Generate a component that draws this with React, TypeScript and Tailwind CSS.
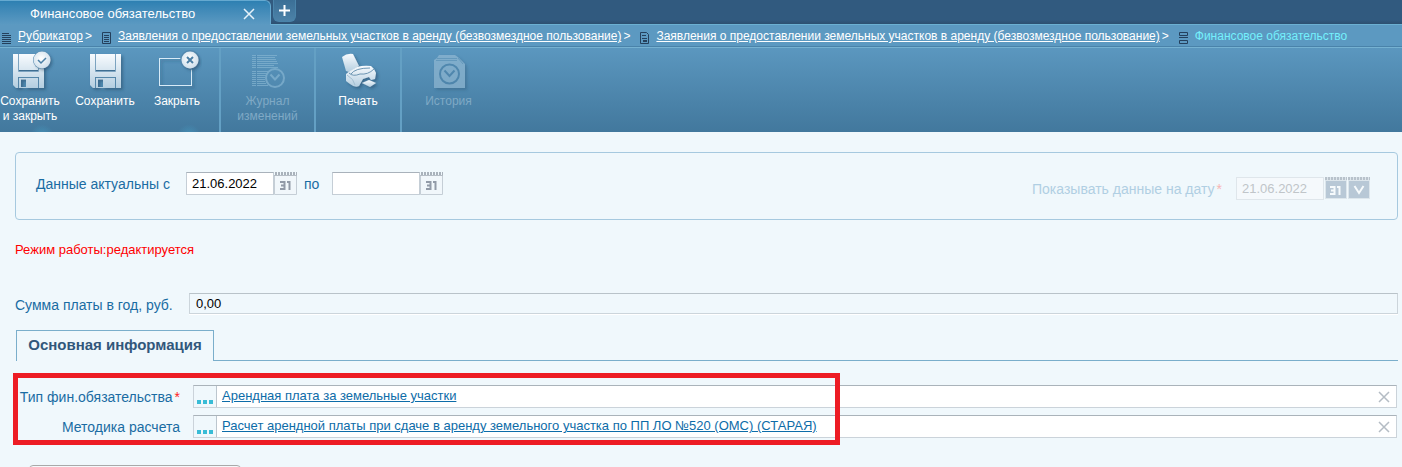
import type { ReactNode } from "react";

function Defs() {
  return (
    <svg className="absolute size-0" aria-hidden="true">
      <defs>
        <linearGradient id="metal" x1="0" y1="0" x2="0" y2="1">
          <stop offset="0" stopColor="#f8fbfe" />
          <stop offset="1" stopColor="#b4cee0" />
        </linearGradient>
        <radialGradient id="badge" cx="0.45" cy="0.4" r="0.6">
          <stop offset="0" stopColor="#ffffff" />
          <stop offset="1" stopColor="#cfdfeb" />
        </radialGradient>
        <filter id="shade" x="-20%" y="-20%" width="150%" height="150%">
          <feDropShadow dx="2" dy="2" stdDeviation="1.5" floodColor="#1d4766" floodOpacity="0.5" />
        </filter>
      </defs>
    </svg>
  );
}

function Icon({ children }: { children: ReactNode }) {
  return (
    <svg width="50" height="44" viewBox="0 0 50 44" fill="none" className="shrink-0" aria-hidden="true">
      {children}
    </svg>
  );
}

function Floppy() {
  return (
    <g filter="url(#shade)">
      <path
        fill="url(#metal)"
        fillRule="evenodd"
        d="M0 0H31V34H3L0 31ZM5 0V17H26V0H25V16H6V0ZM5 23V34H6V24H25V34H26V23ZM8 25.500V33H13V25.500Z"
      />
      <path d="M5.500 0V17.500H25.500V0" stroke="#7ba3c0" />
      <path d="M5.500 34V23.500H25.500V34" stroke="#5587aa" />
    </g>
  );
}

function SaveCloseIcon() {
  return (
    <Icon>
      <g transform="translate(8 4)">
        <Floppy />
      </g>
      <circle cx="37" cy="10" r="9" fill="#5288af" />
      <circle cx="37" cy="10" r="8.500" fill="url(#badge)" filter="url(#shade)" />
      <path d="M33 10L36 13L41 8" stroke="#4b7fa5" strokeWidth="1.500" />
    </Icon>
  );
}

function SaveIcon() {
  return (
    <Icon>
      <g transform="translate(10 4)">
        <Floppy />
      </g>
    </Icon>
  );
}

function CloseIcon() {
  return (
    <Icon>
      <rect x="7.500" y="8.500" width="32" height="27" stroke="#d8ebf7" filter="url(#shade)" />
      <circle cx="38" cy="10" r="10" fill="#5288af" />
      <circle cx="38" cy="10" r="8.500" fill="url(#badge)" filter="url(#shade)" />
      <path d="M35 7L41 13M41 7L35 13" stroke="#4b7fa5" strokeWidth="2" />
    </Icon>
  );
}

function JournalIcon() {
  return (
    <Icon>
      <g stroke="#8ab8d4" opacity="0.65">
        <path
          d="M9 5.500H34M9 7.500H32M9 9.500H33M9 11.500H34M9 13.500H35M9 15.500H31M9 17.500H35M9 21.500H27M9 23.500H25M9 25.500H23M9 27.500H22M9 29.500H22M9 31.500H22M9 33.500H23M9 35.500H25"
        />
        <path d="M13.500 5V36" stroke="#5189b0" />
        <circle cx="32" cy="28" r="9" strokeWidth="2" />
        <path d="M27.500 24.500L32 29.500L36.500 24.500" strokeWidth="2" />
      </g>
    </Icon>
  );
}

function PrinterIcon() {
  return (
    <Icon>
      <g filter="url(#shade)">
        <path fill="url(#metal)" d="M9 7Q14 3 20 4L26 16L16 22L13 21Z" />
        <path
          fill="url(#metal)"
          d="M17 21L24 17Q31 15 38 16Q42 19 43 23L42 29L38 30L36 27L30 29L26 36Q22 38 17 34L13 31V24Z"
        />
        <path fill="url(#metal)" d="M29 33L36 30L43 33L37 37Z" />
        <path d="M16 23Q20 27 27 24Q35 25 41 19M18 24Q22 18 37 18" stroke="#6d96b3" />
        <path d="M14 25Q21 29 22 35" stroke="#a3bfd1" />
      </g>
    </Icon>
  );
}

function HistoryIcon() {
  return (
    <Icon>
      <g opacity="0.6" filter="url(#shade)">
        <path fill="#9bbfd7" d="M10 10L13 8L15 5H31L35 8L38 11L41 14V38H10Z" />
        <path d="M13 8.500H33M12 10.500H33M34 8L39 14" stroke="#6e9ebe" />
        <circle cx="25.500" cy="24" r="9.500" stroke="#4d83a9" strokeWidth="2" />
        <path d="M20.500 20.500L25.500 26L30.500 20.500" stroke="#4d83a9" strokeWidth="2" />
      </g>
    </Icon>
  );
}

type ToolProps = { icon: ReactNode; label: string[]; className: string; disabled?: boolean };

function Tool({ icon, label, className, disabled }: ToolProps) {
  return (
    <button
      type="button"
      disabled={disabled}
      className={`flex shrink-0 flex-col items-center pt-0.5 text-xs leading-[15px] whitespace-nowrap ${
        disabled ? "text-[#7fa9c5]" : "text-white"
      } ${className}`}
    >
      {icon}
      {label.map((line) => (
        <span key={line}>{line}</span>
      ))}
    </button>
  );
}

function Crumb({ icon, children }: { icon: ReactNode; children: ReactNode }) {
  return (
    <li className="flex items-center">
      {icon}
      <a href="#" className="ml-1.5 underline">
        {children}
      </a>
      <span className="ml-0.5">&gt;</span>
    </li>
  );
}

function CrumbIcon({ d }: { d: string }) {
  return (
    <svg width="10" height="12" viewBox="0 0 10 12" fill="none" stroke="#24405c" className="mt-1" aria-hidden="true">
      <path d={d} />
    </svg>
  );
}

function CalendarButton({ label, faded, arrow }: { label: string; faded?: boolean; arrow?: boolean }) {
  return (
    <button type="button" aria-label={label} disabled={faded} className="block">
      <svg width="23" height="23" viewBox="0 0 23 23" fill="none" aria-hidden="true">
        {faded ? (
          <>
            <path d="M1 0H23V22H1Z" fill="#dde6ec" />
            <path d="M2 4H22V21H2Z" fill="#b8c8d6" />
          </>
        ) : (
          <path d="M0.500 4V22.500H22.500V4" stroke="#c5ced6" fill="#f1f7fb" />
        )}
        <path d="M1 1.500H23" stroke={faded ? "#b8c2cb" : "#a9b2bb"} strokeWidth="3" strokeDasharray="2 1" />
        {!faded && <path d="M0 3.500H23" stroke="#b5bdc5" />}
        {arrow ? (
          <path d="M7.500 9L12 16L16.500 9" stroke="#f6fafc" strokeWidth="2" />
        ) : (
          <path
            d="M6 10H10.500V17H6M7 13.500H10.500M13 10H15.500V18"
            stroke={faded ? "#f6fafc" : "#929ba8"}
            strokeWidth="2"
          />
        )}
      </svg>
    </button>
  );
}

type LookupProps = { id: string; label: string; value: string; required?: boolean };

function Lookup({ id, label, value, required }: LookupProps) {
  return (
    <div className="flex items-center">
      <label htmlFor={id} className="w-[165px] shrink-0 text-right text-sm whitespace-nowrap text-[#1a6ca3]">
        {label}
        {required && <span className="ml-0.5 text-[#f22]">*</span>}
      </label>
      <div className="ml-[13px] flex h-[23px] grow items-stretch border border-[#cbd3da] border-t-[#aab3ba] bg-white">
        <button
          id={id}
          type="button"
          aria-label={label}
          className="flex w-[23px] shrink-0 items-end justify-center gap-0.5 border-r border-[#bcc6ce] bg-[#f0f8fc] pb-[3px]"
        >
          <span className="size-1 bg-[#38bcd6]" />
          <span className="size-1 bg-[#38bcd6]" />
          <span className="size-1 bg-[#38bcd6]" />
        </button>
        <a href="#" className="ml-[5px] text-[13px] leading-5 whitespace-nowrap text-[#0d6ca8] underline">
          {value}
        </a>
        <button type="button" aria-label="Очистить" className="ml-auto flex w-6 items-center justify-center">
          <svg width="12" height="12" viewBox="0 0 12 12" stroke="#b4bcc4" strokeWidth="1.500" aria-hidden="true">
            <path d="M1 1L11 11M11 1L1 11" />
          </svg>
        </button>
      </div>
    </div>
  );
}

export default function App() {
  return (
    <div className="h-screen overflow-hidden bg-[#f0f8fc] font-['Liberation_Sans',Arial,sans-serif]">
      <Defs />
      <header>
        <div className="flex h-[25px] items-start bg-[#31577b] bg-linear-to-b from-[#315a7f] from-80% to-[#2c4d6d] shadow-[inset_0_-1px_#6cb0d2]">
          <div className="flex h-[25px] w-[271px] items-center rounded-tr-md border-t border-r border-[#65a9d0] bg-linear-to-b from-[#2d80b2] to-[#5c9ac2] pt-0.5 pl-[30px] text-[13px] text-white">
            <span className="whitespace-nowrap">Финансовое обязательство</span>
            <button type="button" aria-label="Закрыть вкладку" className="mr-[15px] ml-auto">
              <svg width="12" height="12" viewBox="0 0 12 12" stroke="#e6f2fa" strokeWidth="1.500" aria-hidden="true">
                <path d="M1 1L11 11M11 1L1 11" />
              </svg>
            </button>
          </div>
          <button
            type="button"
            aria-label="Новая вкладка"
            className="ml-0.5 flex h-[22px] w-[23px] items-center justify-center rounded-b-md border border-t-0 border-[#4a84aa] bg-linear-to-b from-[#3b6f96] to-[#4c82a8]"
          >
            <svg width="11" height="11" viewBox="0 0 11 11" stroke="#fff" strokeWidth="2" aria-hidden="true">
              <path d="M5.500 0V11M0 5.500H11" />
            </svg>
          </button>
        </div>
        <nav className="flex h-[23px] items-center border-b border-[#76b2d2] bg-[#5c99c1] pl-0.5 text-xs text-white shadow-[inset_0_-1px_#4a83aa]">
          <ol className="flex items-center gap-2.5 whitespace-nowrap">
            <Crumb icon={<CrumbIcon d="M0 1.500H7M0 3.500H9M0 5.500H9M0 7.500H9M0 9.500H9M0 11.500H9" />}>
              Рубрикатор
            </Crumb>
            <Crumb icon={<CrumbIcon d="M0.500 0.500H8.500V11.500H0.500ZM2 3.500H7M2 5.500H7M2 7.500H7M2 9.500H7" />}>
              Заявления о предоставлении земельных участков в аренду (безвозмездное пользование)
            </Crumb>
            <Crumb icon={<CrumbIcon d="M0.500 0.500H6.500L8.500 2.500V11.500H0.500ZM2 3.500H6M2 6.500H7M3 8.500H7M3 9.500H7" />}>
              Заявления о предоставлении земельных участков в аренду (безвозмездное пользование)
            </Crumb>
            <li className="flex items-center">
              <CrumbIcon d="M0.500 0.500H8.500V3.500H0.500ZM0 5.500H9M0.500 8.500H8.500V11.500H0.500Z" />
              <span className="ml-1.5 text-[#74f0fc]">Финансовое обязательство</span>
            </li>
          </ol>
        </nav>
        <div className="flex h-[84px] items-stretch bg-linear-to-b from-[#5b97bf] to-[#42789d]">
          <div className="flex w-[219px] shrink-0">
            <Tool
              icon={<SaveCloseIcon />}
              label={["Сохранить", "и закрыть"]}
              className="w-[60px] bg-[radial-gradient(circle_at_70%_105%,#4592b8_0,transparent_12px)]"
            />
            <Tool icon={<SaveIcon />} label={["Сохранить"]} className="ml-[15px] w-[60px]" />
            <Tool
              icon={<CloseIcon />}
              label={["Закрыть"]}
              className="ml-3 w-[60px] bg-[radial-gradient(circle_at_70%_105%,#4592b8_0,transparent_12px)]"
            />
          </div>
          <Tool
            icon={<JournalIcon />}
            label={["Журнал", "изменений"]}
            className="w-[95px] border-l-2 border-[#64a0c4]"
            disabled
          />
          <Tool icon={<PrinterIcon />} label={["Печать"]} className="w-[86px] border-l-2 border-[#64a0c4]" />
          <Tool
            icon={<HistoryIcon />}
            label={["История"]}
            className="w-[95px] border-l-2 border-[#64a0c4]"
            disabled
          />
        </div>
      </header>

      <main className="pt-5 pr-1 pl-[15px]">
        <section className="flex h-[68px] items-start rounded border border-[#a6c9df] pt-[19px] pr-[27px] pl-5 text-sm text-[#1a6ca3]">
          <div className="flex items-center">
            <label htmlFor="date-from" className="w-[150px] whitespace-nowrap">
              Данные актуальны с
            </label>
            <input
              id="date-from"
              defaultValue="21.06.2022"
              className="h-[23px] w-[88px] border border-[#c5ced6] border-t-[#a9b2bb] bg-white px-[5px] text-[13px] text-black"
            />
            <CalendarButton label="Календарь: начало" />
            <label htmlFor="date-to" className="ml-[7px] w-7 whitespace-nowrap">
              по
            </label>
            <input
              id="date-to"
              className="h-[23px] w-[88px] border border-[#c5ced6] border-t-[#a9b2bb] bg-white px-[5px] text-[13px] text-black"
            />
            <CalendarButton label="Календарь: окончание" />
          </div>
          <div className="mt-[5px] ml-auto flex items-center">
            <label htmlFor="date-view" className="mr-3.5 whitespace-nowrap text-[#b0cfe3]">
              Показывать данные на дату<span className="ml-0.5 text-[#f7b5b5]">*</span>
            </label>
            <input
              id="date-view"
              disabled
              defaultValue="21.06.2022"
              className="h-[23px] w-[88px] border border-[#dfe6eb] bg-[#f5f9fc] px-[5px] text-[13px] text-[#c0c5c9]"
            />
            <CalendarButton label="Календарь: дата показа" faded />
            <CalendarButton label="Применить дату" faded arrow />
          </div>
        </section>

        <p className="mt-5 text-[13px] leading-5 text-[#f00]">Режим работы:редактируется</p>

        <div className="mt-[33px] flex items-start">
          <label htmlFor="amount" className="w-[174px] shrink-0 pt-0.5 text-sm whitespace-nowrap text-[#1a6ca3]">
            Сумма платы в год, руб.
          </label>
          <input
            id="amount"
            readOnly
            defaultValue="0,00"
            className="h-[21px] min-w-0 grow border border-[#ccd5db] border-t-[#b9c3c9] bg-[#f0f8fc] px-1.5 text-[13px] text-black shadow-[0_1px_#fff]"
          />
        </div>

        <div role="tablist" className="mt-[15px] flex pl-px">
          <button
            type="button"
            role="tab"
            aria-selected="true"
            className="h-[31px] w-[198px] border border-b-0 border-[#7aaecb] pb-0.5 text-center text-[15px] font-bold whitespace-nowrap text-[#31577b]"
          >
            Основная информация
          </button>
          <div className="grow border-b border-[#7aaecb]" />
        </div>

        <div className="relative mt-6 flex flex-col gap-[7px] pr-px">
          <Lookup id="kind" label="Тип фин.обязательства" value="Арендная плата за земельные участки" required />
          <Lookup
            id="method"
            label="Методика расчета"
            value="Расчет арендной платы при сдаче в аренду земельного участка по ПП ЛО №520 (ОМС) (СТАРАЯ)"
          />
          <div className="pointer-events-none absolute -top-3 -left-0.5 h-[72px] w-[827px] border-5 border-[#ed1c24]" />
        </div>

        <button
          type="button"
          aria-label="Действие"
          className="mt-[27px] ml-3.5 block h-6 w-[212px] rounded border border-[#a9a9a9] bg-[#f5f9fb]"
        />
      </main>
    </div>
  );
}
